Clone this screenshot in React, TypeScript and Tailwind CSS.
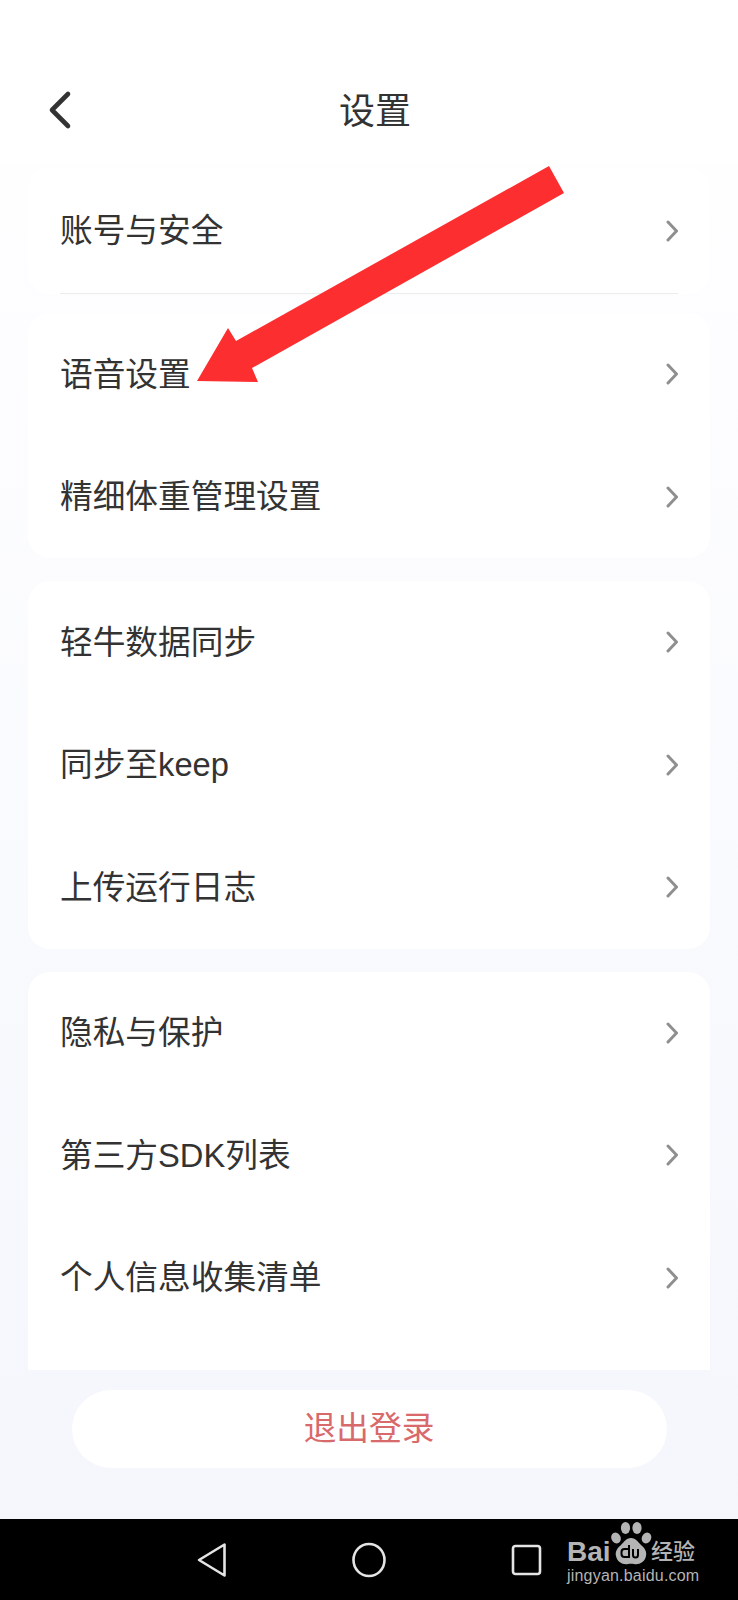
const font = "font-['Liberation_Sans','Noto_Sans_CJK_SC',sans-serif]";

const Chevron = () => (
  <svg width="12" height="22" viewBox="0 0 12 22" fill="none" className="shrink-0">
    <path d="M2 2 10.5 11 2 20" stroke="#8f8f8f" strokeWidth="3" strokeLinecap="round" strokeLinejoin="round" />
  </svg>
);

const Label = ({ children }: { children: string }) => (
  <span className="mt-[2px] text-[32.7px] leading-none text-[#333333]">{children}</span>
);

const Row = ({ label }: { label: string }) => (
  <div className="flex h-[122.5px] items-center justify-between px-[32px]">
    <Label>{label}</Label>
    <Chevron />
  </div>
);

const BaiduMark = () => (
  <div className="absolute left-[567px] top-[1522px] h-[64px] w-[132px] text-[#b4b4b4]">
    <span className="absolute left-0 top-[15px] text-[28px] font-bold leading-[30px]">Bai</span>
    <svg viewBox="0 0 42 43" className="absolute left-[43px] top-0 h-[43px] w-[42px]" fill="#b4b4b4">
      <ellipse cx="15.5" cy="6" rx="4.6" ry="6" />
      <ellipse cx="27" cy="6" rx="4.6" ry="6" />
      <ellipse cx="6" cy="16" rx="4.6" ry="5.6" transform="rotate(-25 6 16)" />
      <ellipse cx="36.5" cy="16" rx="4.6" ry="5.6" transform="rotate(25 36.5 16)" />
      <path d="M21 16c5 0 7 4 10 7 4 3 6 7 5 11-1 6-7 9-12 8-2-.5-4-.5-6 0-5 1-11-2-12-8-1-4 1-8 5-11 3-3 5-7 10-7Z" />
      <path d="M19 23v12h-4.500c-2 0-3-1-3-3v-2c0-2 1-3 3-3H19M23 27v6c0 2 1 2.500 2.500 2.500s2.500-.5 2.500-2.500v-6" fill="none" stroke="#000" strokeWidth="2" />
    </svg>
    <span className="absolute left-[84px] top-[18px] text-[22px] font-medium leading-[24px]">经验</span>
    <span className="absolute left-0 top-[44px] text-[16px] leading-[20px] tracking-[0.2px]">jingyan.baidu.com</span>
  </div>
);

export default function App() {
  return (
    <div className={`relative flex h-[1600px] w-[738px] flex-col overflow-hidden bg-gradient-to-b from-white to-[#f4f6fc] ${font}`}>
      {/* header */}
      <header className="relative flex h-[163px] shrink-0 items-center justify-center bg-white">
        <svg width="30" height="44" viewBox="0 0 30 44" fill="none" className="absolute left-[45px] top-[88px]">
          <path d="M23 6 7 22l16 16" stroke="#333333" strokeWidth="4.6" strokeLinecap="round" strokeLinejoin="round" />
        </svg>
        <h1 className="ml-[12px] mt-[60px] text-[36px] font-normal leading-none text-[#333333]">设置</h1>
      </header>

      {/* settings list */}
      <main className="mt-[5px] h-[1202px] shrink-0 overflow-hidden px-[28px]">
        <section className="rounded-[22px] bg-white">
          <div className="mx-[32px] flex h-[126px] items-center justify-between border-b border-[#ececec]">
            <Label>账号与安全</Label>
            <Chevron />
          </div>
        </section>

        <section className="mt-[19px] rounded-[22px] bg-white">
          <Row label="语音设置" />
          <Row label="精细体重管理设置" />
        </section>

        <section className="mt-[23px] rounded-[22px] bg-white">
          <Row label="轻牛数据同步" />
          <Row label="同步至keep" />
          <Row label="上传运行日志" />
        </section>

        <section className="mt-[23px] h-[399px] rounded-t-[22px] bg-white">
          <Row label="隐私与保护" />
          <Row label="第三方SDK列表" />
          <Row label="个人信息收集清单" />
        </section>
      </main>

      {/* logout */}
      <div className="mt-[20px] flex h-[78px] w-[595px] shrink-0 items-center justify-center self-center rounded-full bg-white">
        <span className="text-[32.7px] leading-none text-[#d96a6c]">退出登录</span>
      </div>

      {/* android nav bar */}
      <nav className="mt-[51px] flex h-[81px] shrink-0 items-center bg-black pl-[197px]">
        <svg width="30" height="36" viewBox="0 0 30 36" fill="none">
          <path d="M27.5 2.5v31L2 18Z" stroke="#e4e4e4" strokeWidth="2.6" strokeLinejoin="round" />
        </svg>
        <svg width="34" height="36" viewBox="0 0 34 36" fill="none" className="ml-[125px]">
          <ellipse cx="17" cy="18" rx="15.500" ry="16" stroke="#e4e4e4" strokeWidth="2.6" />
        </svg>
        <svg width="32" height="32" viewBox="0 0 32 32" fill="none" className="ml-[125px]">
          <rect x="2" y="2" width="27" height="28" rx="2.500" stroke="#e4e4e4" strokeWidth="2.6" />
        </svg>
      </nav>

      <BaiduMark />

      {/* annotation arrow over the list */}
      <svg width="738" height="260" viewBox="0 150 738 260" className="pointer-events-none absolute left-0 top-[150px]">
        <path d="M549 166 564 193 252 368 258 382 197 381 228 328 236 341Z" fill="#fd2e30" />
      </svg>
    </div>
  );
}
